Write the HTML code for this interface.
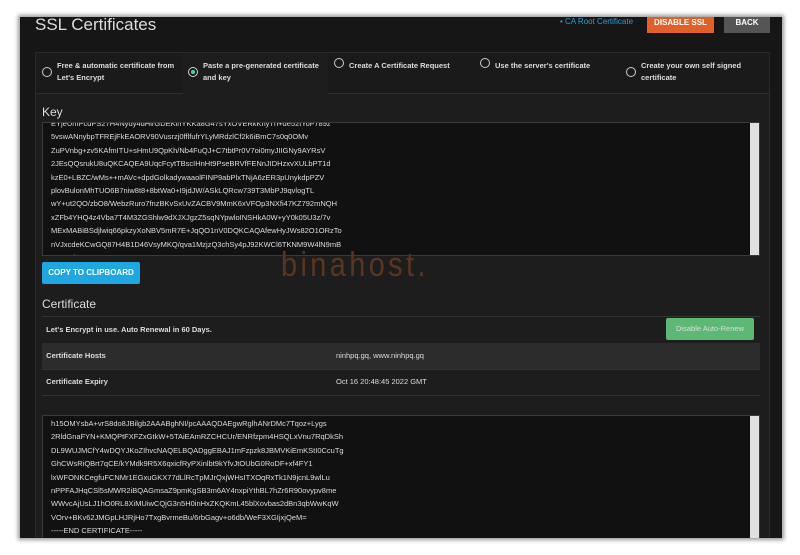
<!DOCTYPE html>
<html><head><style>
body{margin:0;width:800px;height:555px;background:#fff;font-family:"Liberation Sans",sans-serif;overflow:hidden;position:relative}
.frame{position:absolute;left:20px;top:17px;width:762px;height:521px;background:#161616;box-shadow:0 0 4px 2px #999;overflow:hidden}
.title{position:absolute;left:15px;top:-2px;color:#ddd;font-size:17px}
.ca{position:absolute;left:540px;top:0;color:#2a9fd8;font-size:8px}
.btn{position:absolute;color:#fff;font-size:8px;font-weight:bold;text-align:center}
.panel{position:absolute;left:15px;top:35px;width:733px;height:500px;background:#1d1d1d;border:1px solid #2a2a2a}
.tab{position:absolute;top:0;height:40px;width:146px;border-right:1px solid #2e2e2e;border-bottom:1px solid #2e2e2e;background:#1a1a1a;color:#ddd;font-size:7.5px;font-weight:bold;line-height:12px}
.tab .r{position:absolute;left:6px;top:14px;width:8px;height:8px;border:1px solid #ccc;border-radius:50%}
.tab span{position:absolute;left:21px;top:7px;width:120px}
.ta{position:absolute;left:6px;width:718px;background:#111;border:1px solid #3a3a3a;color:#ddd;font-size:7.5px;line-height:13.4px;overflow:hidden;padding-left:8px;box-sizing:border-box}
.sb{position:absolute;right:0;top:0;width:9px;height:100%;background:#e0e0e0}
.h{position:absolute;left:6px;color:#ddd;font-size:12px}
.row{position:absolute;left:6px;width:718px;height:26px;color:#ddd;font-size:7.5px;font-weight:bold;line-height:26px;border-bottom:1px solid #333}
</style></head><body>
<div class="frame">
<div class="title">SSL Certificates</div>
<div class="ca">• CA Root Certificate</div>
<div class="btn" style="left:627px;top:-5px;width:67px;height:21px;line-height:21px;background:#e0602a">DISABLE SSL</div>
<div class="btn" style="left:704px;top:-5px;width:46px;height:21px;line-height:21px;background:#555">BACK</div>
<div class="panel">
<div class="tab" style="left:0"><div class="r"></div><span>Free &amp; automatic certificate from Let's Encrypt</span></div>
<div class="tab" style="left:146px;background:#1d1d1d;border-bottom:none"><div class="r" style="background:radial-gradient(#4c9 35%,transparent 40%)"></div><span>Paste a pre-generated certificate and key</span></div>
<div class="tab" style="left:292px"><div class="r" style="top:5px"></div><span>Create A Certificate Request</span></div>
<div class="tab" style="left:438px"><div class="r" style="top:5px"></div><span>Use the server's certificate</span></div>
<div class="tab" style="left:584px;width:149px;border-right:none"><div class="r"></div><span>Create your own self signed certificate</span></div>
<div class="h" style="top:52px">Key</div>
<div class="ta" style="top:69px;height:134px;padding-top:0"><div style="margin-top:-6px">EYjeUmPcdPS27H4Nydy4dHlrGDEKlnYKKa8G47sYxOVERkKhyTn+de52tYoF789z<br>5vswANnybpTFREjFkEAORV90Vusrzj0fflfufrYLyMRdzlCf2k6iBmC7s0q0OMv<br>ZuPVnbg+zv5KAfmITU+sHmU9QpKh/Nb4FuQJ+C7tbtPr0V7oi0myJIIGNy9AYRsV<br>2JEsQQsrukU8uQKCAQEA9UqcFcytTBscIHnHt9PseBRVfFENnJIDHzxvXULbPT1d<br>kzE0+LBZC/wMs++mAVc+dpdGolkadywaaolFINP9abPlxTNjA6zER3pUnykdpPZV<br>plovBulonMhTUO6B7niw8t8+8btWa0+I9jdJW/ASkLQRcw739T3MbPJ9qvlogTL<br>wY+ut2QO/zbO8/WebzRuro7fnzBKvSxUvZACBV9MmK6xVFOp3NXfi47KZ792mNQH<br>xZFb4YHQ4z4Vba7T4M3ZGShlw9dXJXJgzZ5sqNYpwloINSHkA0W+yY0k05U3z/7v<br>MExMABiBSdjlwiq66pkzyXoNBV5mR7E+JqQO1nV0DQKCAQAfewHyJWs82O1ORzTo<br>nVJxcdeKCwGQ87H4B1D46VsyMKQ/qva1MzjzQ3chSy4pJ92KWCl6TKNM9W4lN9mB<br>nVJxcdeKCwGQ87H4B1D46VsyMKQ</div><div class="sb"></div></div>
<div style="position:absolute;left:245px;top:193px;color:#5a3620;font-size:34px;letter-spacing:4px;transform:scaleX(.85);transform-origin:left">binahost.</div>
<div class="btn" style="left:6px;top:209px;width:98px;height:22px;line-height:22px;background:#1ea7e1;border-radius:2px">COPY TO CLIPBOARD</div>
<div class="h" style="top:244px">Certificate</div>
<div class="row" style="top:263px;border-top:1px solid #333">&nbsp;&nbsp;Let's Encrypt in use. Auto Renewal in 60 Days.
<div style="position:absolute;right:6px;top:1px;width:88px;height:22px;line-height:22px;background:#5cb874;font-weight:normal;text-align:center;border-radius:2px">Disable Auto-Renew</div></div>
<div class="row" style="top:290px;background:#2c2c2c">&nbsp;&nbsp;Certificate Hosts<span style="position:absolute;left:294px;font-weight:normal">ninhpq.gq, www.ninhpq.gq</span></div>
<div class="row" style="top:316px">&nbsp;&nbsp;Certificate Expiry<span style="position:absolute;left:294px;font-weight:normal">Oct 16 20:48:45 2022 GMT</span></div>
<div class="ta" style="top:362px;height:140px;padding-top:1px">h15OMYsbA+vrS8do8JBilgb2AAABghNI/pcAAAQDAEgwRglhANrDMc7Tqoz+Lygs<br>2RldGnaFYN+KMQPtFXFZxGtkW+5TAiEAmRZCHCUr/ENRfzpm4HSQLxVnu7RqDkSh<br>DL9WUJMCfY4wDQYJKoZIhvcNAQELBQADggEBAJ1mFzpzk8JBMVKiEmKStI0CcuTg<br>GhCWsRiQBrt7qCE/kYMdk9R5X6qxicfRyPXinlbt9kYfvJtOUbG0RoDF+xf4FY1<br>lxWFONKCegfuFCNMr1EGxuGKX77dLlRcTpMJrQxjWHsITXOqRxTk1N9jcnL9wlLu<br>nPPFAJHqCSl5sMWR2iBQAGmsaZ9pmKgSB3m6AY4nxpiYthBL7hZr6R90ovypv8me<br>WWvcAjUsLJ1hO0RL8XiMUiwCQjG3n5H0inHxZKQKmL45blXovbas2dBn3qbWwKqW<br>VOrv+BKv62JMGpLHJRjHo7TxgBvrmeBu/6rbGagv+o6db/WeF3XGIjxjQeM=<br>-----END CERTIFICATE-----<div class="sb"></div></div>
</div>
</div>
</body></html>
